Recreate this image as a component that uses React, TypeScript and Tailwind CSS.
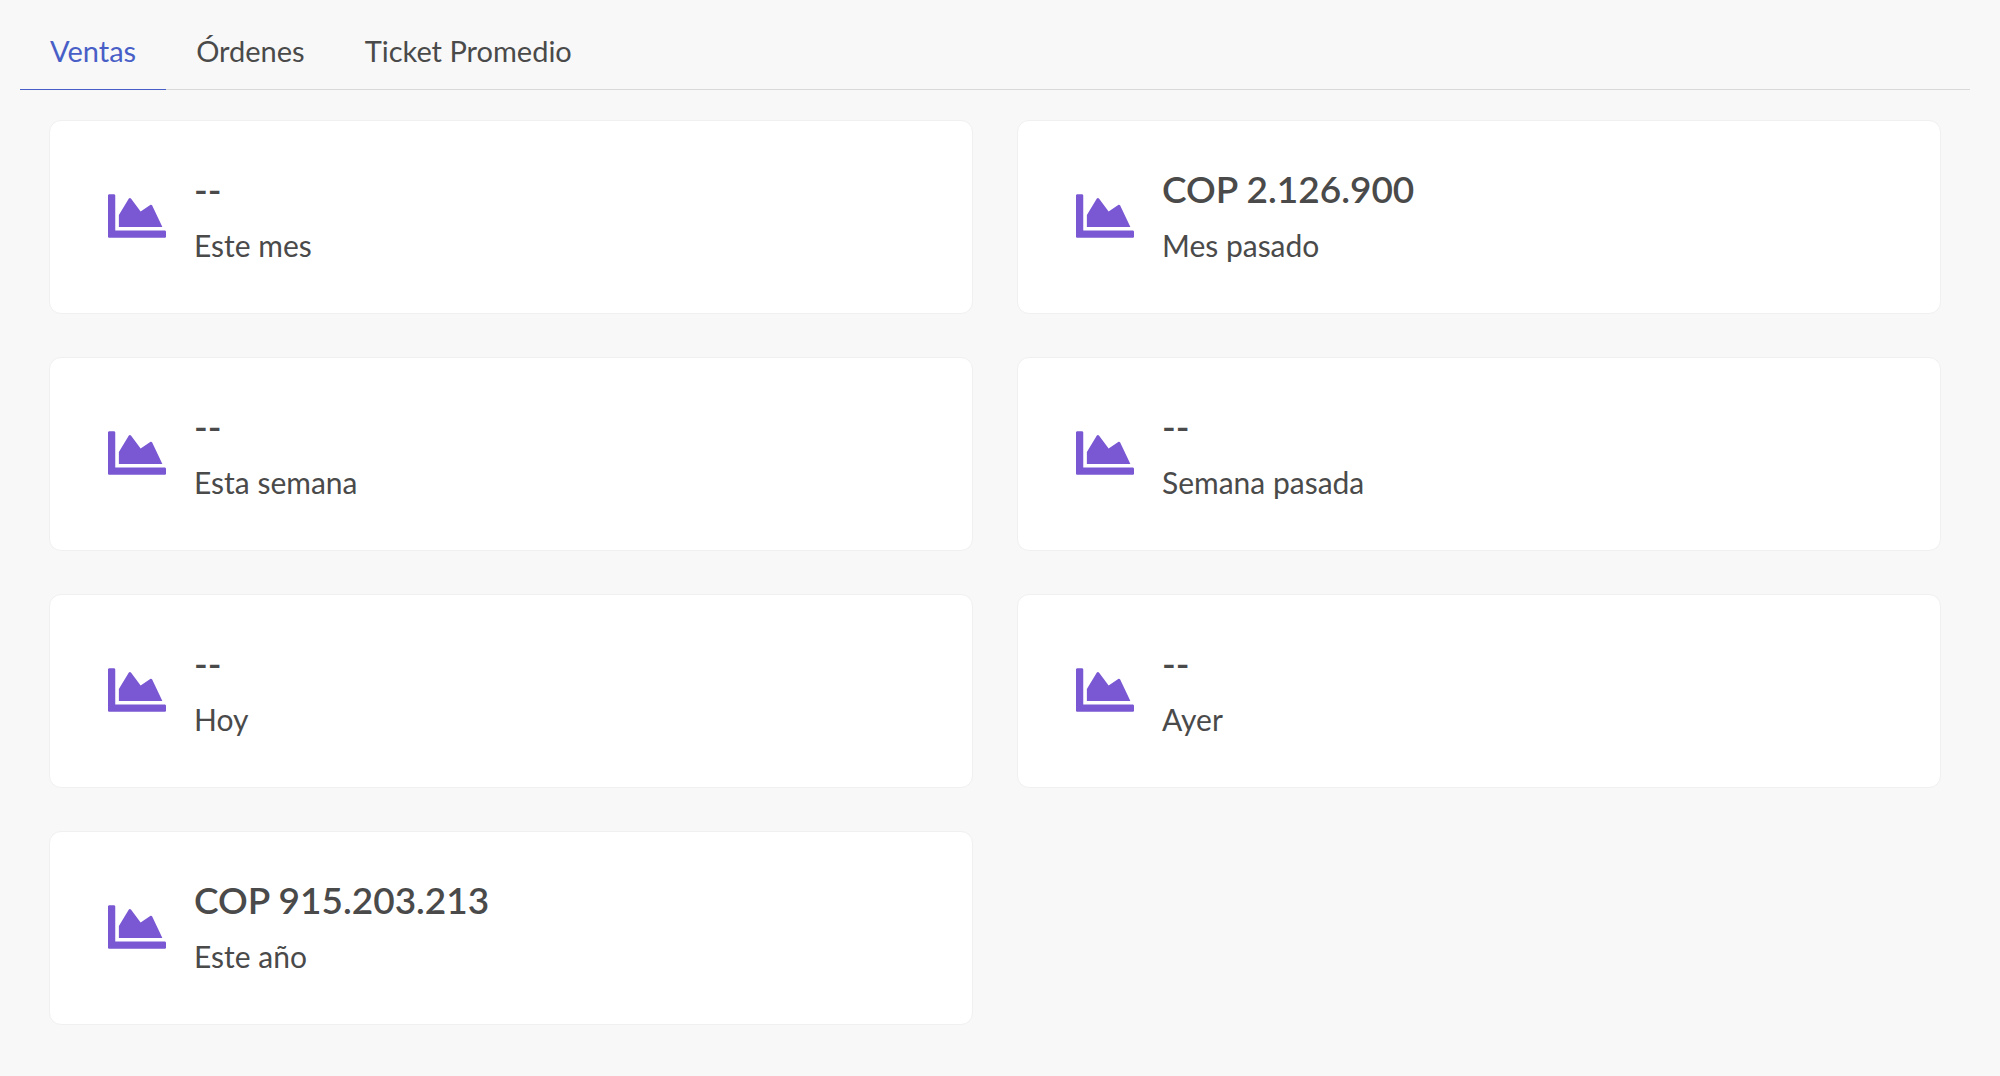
import { useState } from "react";
import { FaChartArea } from "react-icons/fa";

const tabs = ["Ventas", "Órdenes", "Ticket Promedio"];

const stats = [
  { value: "--", label: "Este mes" },
  { value: "COP 2.126.900", label: "Mes pasado" },
  { value: "--", label: "Esta semana" },
  { value: "--", label: "Semana pasada" },
  { value: "--", label: "Hoy" },
  { value: "--", label: "Ayer" },
  { value: "COP 915.203.213", label: "Este año" },
];

function StatCard({ value, label }: { value: string; label: string }) {
  return (
    <article className="flex items-center gap-7 rounded-xl border border-[#f0f0f0] bg-white px-[58px] pt-[44px] pb-[46px]">
      <FaChartArea className="size-[58px] shrink-0 text-[#7a58d3]" aria-hidden="true" />
      <div>
        <p className="mb-2.5 text-[37px] leading-[48px] font-semibold">{value}</p>
        <p className="text-[30px] leading-[44px]">{label}</p>
      </div>
    </article>
  );
}

export default function App() {
  const [active, setActive] = useState(0);
  return (
    <main className="min-h-screen bg-[#f8f8f8] pt-3 pr-[30px] pb-12 pl-5 font-['Lato','Noto_Sans',sans-serif] text-[#4a4a4a]">
      <nav role="tablist" className="flex border-b border-[#d9d9d9]">
        {tabs.map((tab, i) => (
          <button
            key={tab}
            type="button"
            role="tab"
            aria-selected={i === active}
            onClick={() => setActive(i)}
            className={
              i === active
                ? "-mb-px h-[78px] border-b border-[#485fc7] px-[30px] text-[29px] text-[#485fc7]"
                : "-mb-px h-[78px] border-b border-transparent px-[30px] text-[29px]"
            }
          >
            {tab}
          </button>
        ))}
      </nav>
      <section className="grid grid-cols-2 gap-x-11 gap-y-[43px] px-[29px] pt-[30px]">
        {stats.map((s) => (
          <StatCard key={s.label} value={s.value} label={s.label} />
        ))}
      </section>
    </main>
  );
}
